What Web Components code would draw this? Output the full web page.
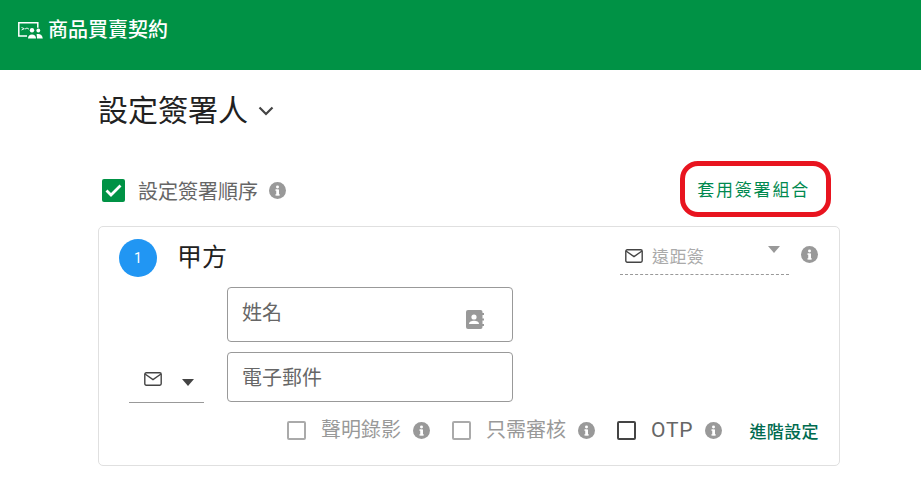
<!DOCTYPE html>
<html lang="zh-Hant"><head><meta charset="utf-8">
<style>
html,body{margin:0;padding:0;background:#fff;width:921px;height:482px;overflow:hidden;font-family:Roboto,"Noto Sans CJK TC",sans-serif}
</style></head><body>
<app-header>商品買賣契約</app-header>
<signer-page></signer-page>
<script>
const FONT='Roboto,"Noto Sans CJK TC",sans-serif';
const MAIL='<svg viewBox="0 0 18 14" width="18" height="14" fill="none" stroke="currentColor" stroke-width="1.4"><rect x=".8" y=".8" width="16.4" height="12.4" rx="1.4"/><path d="M1 2l8 5.6L17 2"/></svg>';
const INFO_PATH='<svg viewBox="0 0 16 16" width="17" height="17"><circle cx="8" cy="8" r="8" fill="#999"/><rect x="6.8" y="7" width="2.6" height="5.6" fill="#fff"/><rect x="6" y="7" width="2" height="1.2" fill="#fff"/><rect x="6" y="11.6" width="4.2" height="1.1" fill="#fff"/><circle cx="8" cy="4.6" r="1.4" fill="#fff"/></svg>';
function def(name,html){
  customElements.define(name,class extends HTMLElement{
    constructor(){super();this.attachShadow({mode:'open'}).innerHTML=html;}
  });
}
def('info-icon',`<style>:host{display:inline-flex;width:17px;height:17px;flex:none}</style>${INFO_PATH}`);
def('app-header',`<style>
:host{display:flex;align-items:flex-start;height:70px;box-sizing:border-box;background:#009245;color:#fff;padding:19px 0 0 18px;gap:4px;font:500 20px/22px ${FONT}}
svg{flex:none;margin-top:2px}
</style>
<svg width="26" height="18" viewBox="0 0 26 18" fill="none"><path d="M9 15H.8V1.700h19v5" stroke="#fff" stroke-width="1.500"/><path d="M3.500 6.500l2.800 1.200-2.800 1.300M7 8l2-1 2 1.200" stroke="#fff" stroke-width=".9"/><circle cx="14" cy="9.300" r="2.200" fill="#fff"/><circle cx="20.300" cy="9.500" r="1.900" fill="#fff"/><path d="M10 17.500c0-2.600 1.800-4 4-4s4 1.400 4 4z" fill="#fff"/><path d="M18.500 13.300c.5-.2 1.100-.3 1.700-.3 2.300 0 4.300 1.300 4.600 4.500h-5.800c0-1.700-.2-3.100-.5-4.200z" fill="#fff"/></svg>
<span><slot></slot></span>`);
def('check-box',`<style>
:host{display:inline-flex;align-items:center;flex:none;font-size:20px;line-height:24px;color:#999}
.b{width:15px;height:15px;border:2px solid #aaa;border-radius:2px;margin-right:15px;flex:none}
:host([strong]) .b{border-color:#444}
:host([strong]){color:#666;font-size:21px;letter-spacing:.8px}
</style><span class="b"></span><slot></slot>`);
def('text-field',`<style>
:host{display:block;box-sizing:border-box;width:286px;border:1px solid #999;border-radius:4px;padding:11px 14px;font-size:20px;line-height:28px;color:#666;position:relative}
::slotted(svg){position:absolute;right:28px;top:22px}
</style><slot></slot>`);
def('signer-card',`<style>
:host{display:grid;box-sizing:border-box;width:742px;height:240px;border:1px solid #e0e0e0;border-radius:5px;grid-template-columns:128px 286px 1fr;grid-template-rows:60px 55px 60px 1fr}
.head{grid-column:1/3;display:flex;align-items:flex-start;padding:12px 0 0 20px}
.num{width:38px;height:38px;border-radius:50%;background:#2196f3;color:#fff;font-size:14px;display:flex;align-items:center;justify-content:center;flex:none}
.party{font-size:25px;line-height:34px;color:#212121;margin-left:20px;padding-top:2px}
.sign{grid-column:3;grid-row:1;display:flex;align-items:flex-start;justify-content:flex-end;padding:16px 21px 0 0}
.sel{width:169px;height:32px;box-sizing:border-box;border-bottom:1px dashed #999;display:flex;align-items:flex-start;color:#aaa;font-size:17px;line-height:28px;padding-left:5px;margin-right:12px;letter-spacing:.4px}
.sel svg:first-child{color:#444;margin:6px 9px 0 0}
.tri{width:0;height:0;border:6.5px solid transparent;border-top:7px solid #999;border-bottom:0;margin:3px 0 0 auto;position:relative;left:-9px}
.sign info-icon{margin-top:3px}
.name{grid-column:2;grid-row:2}
.email{grid-column:2;grid-row:3;margin-top:10px;height:50px;padding-top:11px}
.kind{grid-column:1;grid-row:3;justify-self:end;align-self:end;margin:0 23px -1px 0;width:75px;height:41px;box-sizing:border-box;border-bottom:1px solid #999;color:#444;display:flex;padding:10px 0 0 15px}
.kind i{width:0;height:0;border:6.5px solid transparent;border-top:7px solid #444;border-bottom:0;margin:7px 0 0 20px}
.opts{grid-column:1/4;grid-row:4;display:flex;align-items:center;justify-content:flex-end;padding:0 20px 7px 0}
.opts info-icon{margin:0 22px 0 12px}
.opts info-icon.l{margin-right:27px}
.adv{color:#006b4f;font-size:17px;letter-spacing:.4px;font-weight:500}
</style>
<div class="head"><span class="num">1</span><span class="party">甲方</span></div>
<div class="sign"><div class="sel">${MAIL}<span>遠距簽</span><i class="tri"></i></div><info-icon></info-icon></div>
<text-field class="name">姓名<svg width="18" height="19" viewBox="0 0 18 19"><rect width="16.500" height="19" rx="2" fill="#999"/><circle cx="8" cy="7" r="2.600" fill="#fff"/><path d="M3 14c0-2.400 2.400-3.200 5-3.200s5 .8 5 3.200z" fill="#fff"/><path d="M16 3h2v2h-2zM16 8.500h2v2h-2zM16 14h2v2h-2z" fill="#999"/></svg></text-field>
<div class="kind">${MAIL}<i></i></div>
<text-field class="email">電子郵件</text-field>
<div class="opts">
<check-box>聲明錄影</check-box><info-icon></info-icon>
<check-box>只需審核</check-box><info-icon></info-icon>
<check-box strong>OTP</check-box><info-icon class="l"></info-icon>
<span class="adv">進階設定</span>
</div>`);
def('signer-page',`<style>
:host{display:block;padding:0 0 0 98px;position:relative;color:#212121}
.title{display:flex;align-items:center;height:76px;font-size:30px;font-weight:400;color:#212121}
.title svg{margin-left:10px;margin-top:6px}
.row{display:flex;align-items:center;width:742px;height:80px;box-sizing:border-box;padding:9px 30px 0 4px}
.ck{width:23px;height:23px;border-radius:2px;background:#009245;display:flex;align-items:center;justify-content:center;flex:none}
.lab{font-size:20px;color:#666;margin-left:13px}
.row info-icon{margin-left:11px}
.apply{margin-left:auto;margin-bottom:5px;color:#00894f;font-size:17px;letter-spacing:1.8px}
.ring{position:absolute;left:680px;top:91px;width:151px;height:56px;box-sizing:border-box;border:5px solid #e8141f;border-radius:18px}
</style>
<div class="title">設定簽署人<svg width="16" height="10" viewBox="0 0 16 10" fill="none"><path d="M1.500 1.500L8 8l6.500-6.500" stroke="#444" stroke-width="2.200"/></svg></div>
<div class="row"><span class="ck"><svg width="17" height="13" viewBox="0 0 17 13" fill="none"><path d="M1.500 6.500L6 11 15.500 1.500" stroke="#fff" stroke-width="2.800"/></svg></span><span class="lab">設定簽署順序</span><info-icon></info-icon><span class="apply">套用簽署組合</span></div>
<signer-card></signer-card>
<div class="ring"></div>`);
</script>
</body></html>
